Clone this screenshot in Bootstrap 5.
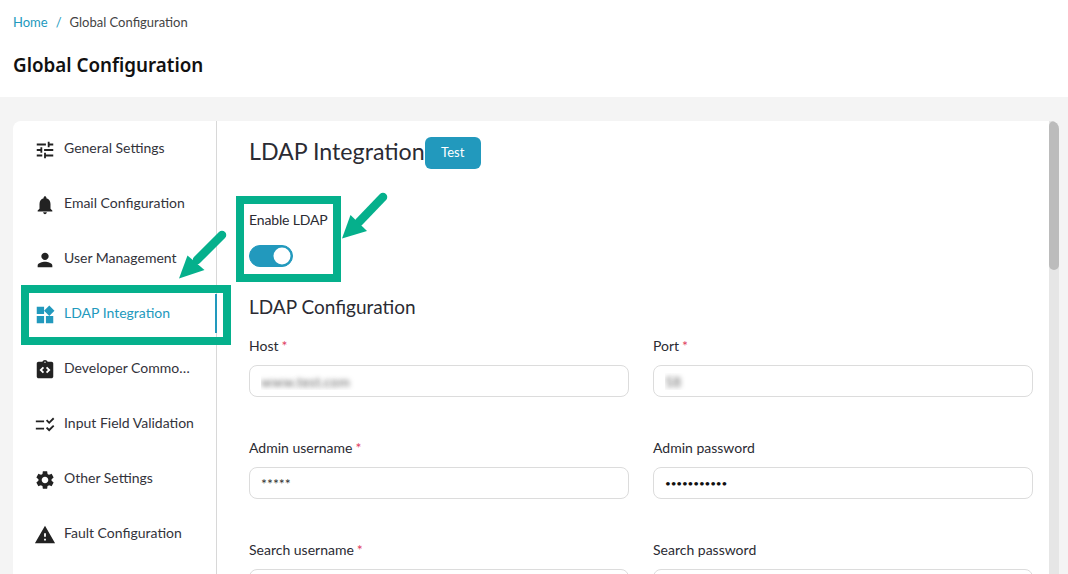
<!doctype html>
<html lang="en">
<head>
<meta charset="utf-8">
<title>Global Configuration</title>
<link href="https://cdn.jsdelivr.net/npm/bootstrap@5.3.0/dist/css/bootstrap.min.css" rel="stylesheet">
<style>
html,body{height:574px;overflow:hidden}
body{background:#f4f4f4;color:#2b2b33;font-family:"Lato","Noto Sans",sans-serif;font-size:14px}
.top-head{background:#fff;height:97px;padding:12px 13px 0}
.crumbs{font-size:13px;line-height:20px;margin:0;--bs-breadcrumb-item-padding-x:8px}
.crumbs a{color:#2299bd;text-decoration:none}
.crumbs .breadcrumb-item.active{color:#444}
.crumbs .breadcrumb-item+.breadcrumb-item::before{color:#2299bd}
.page-title{font-family:"Noto Sans",sans-serif;font-size:18.8px;font-weight:600;line-height:28px;margin:19px 0 0;color:#111}
.shell{margin:24px 9px 0 13px;height:453px;background:#fff;border-radius:8px 8px 0 0;overflow:hidden}
.side{width:204px;flex:none;border-right:1px solid #d8d8d8}
.side-item{height:55px;padding-left:21px;gap:8px;color:#33333b;text-decoration:none;white-space:nowrap;position:relative}
.side-item svg{width:22px;height:22px;flex:none;fill:#222;margin-top:3px}
.side-item span{overflow:hidden;text-overflow:ellipsis;width:132px;line-height:20px;margin-bottom:1px}
.side-item.on{color:#2299bd}
.side-item.on svg{fill:#2299bd}
.side-item.on::after{content:"";position:absolute;right:-1px;top:8px;bottom:8px;width:2px;background:#2299bd}
.pane{overflow:hidden;padding:16px 16px 0 32px;min-width:0}
.pane-head{font-size:23.2px;font-weight:400;line-height:28px;margin:0;color:#2b2b33}
.test-btn{background:#2299bd;border:0;color:#fff;font-size:13px;width:56px;height:32px;padding:0;border-radius:6px}
.test-btn:hover{background:#2299bd;color:#fff}
.field-label{line-height:20px;margin:0 0 9px;display:block}
.toggle-wrap{margin-top:41px}
.toggle-wrap .field-label{margin-bottom:15px;letter-spacing:-.15px}
.form-check.switch-box{padding:0;margin:0;min-height:0;height:22px}
.switch-box .form-check-input{width:44px;height:22px;margin:0;float:none;display:block;background-color:#2299bd;border-color:#2299bd;background-image:url("data:image/svg+xml,%3csvg xmlns='http://www.w3.org/2000/svg' viewBox='-4 -4 8 8'%3e%3ccircle r='3.4' fill='%23fff'/%3e%3c/svg%3e")}
.sub-head{font-size:19px;font-weight:400;line-height:26px;margin:27px 0 0}
.req{color:#e0405f;margin-left:3px}
.form-row{--bs-gutter-x:24px;--bs-gutter-y:0}
.fld{margin-top:16px;height:86px}
.fld .form-control{height:32px;border-color:#dcdcdc;border-radius:8px;padding:0 11px;font-size:14px;color:#333;box-shadow:none}
.fld .blurred{color:transparent;text-shadow:0 0 5px #666}
.fld .dots{color:#111;font-size:10px;letter-spacing:-.15px}
.fake-track{width:10px;flex:none;background:#e6e6e6}
.fake-thumb{height:149px;background:#bcbcbc;border-radius:5px}
.overlay{position:absolute;left:0;top:0;pointer-events:none}
</style>
</head>
<body>
<header class="top-head">
  <nav aria-label="breadcrumb"><ol class="breadcrumb crumbs">
    <li class="breadcrumb-item"><a href="#">Home</a></li>
    <li class="breadcrumb-item active" aria-current="page">Global Configuration</li>
  </ol></nav>
  <h1 class="page-title">Global Configuration</h1>
</header>
<main class="shell d-flex">
  <aside class="side">
    <a href="#" class="side-item d-flex align-items-center"><svg viewBox="0 0 24 24"><path d="M3 17v2h6v-2H3zM3 5v2h10V5H3zm10 16v-2h8v-2h-8v-2h-2v6h2zM7 9v2H3v2h4v2h2V9H7zm14 4v-2H11v2h10zm-6-4h2V7h4V5h-4V3h-2v6z"/></svg><span>General Settings</span></a>
    <a href="#" class="side-item d-flex align-items-center"><svg viewBox="0 0 24 24"><path d="M12 22c1.1 0 2-.9 2-2h-4c0 1.1.89 2 2 2zm6-6v-5c0-3.07-1.64-5.64-4.5-6.32V4c0-.83-.67-1.5-1.5-1.5s-1.5.67-1.5 1.5v.68C7.63 5.36 6 7.92 6 11v5l-2 2v1h16v-1l-2-2z"/></svg><span>Email Configuration</span></a>
    <a href="#" class="side-item d-flex align-items-center"><svg viewBox="0 0 24 24"><path d="M12 12c2.21 0 4-1.79 4-4s-1.79-4-4-4-4 1.79-4 4 1.79 4 4 4zm0 2c-2.67 0-8 1.34-8 4v2h16v-2c0-2.66-5.33-4-8-4z"/></svg><span>User Management</span></a>
    <a href="#" class="side-item on d-flex align-items-center"><svg viewBox="0 0 24 24"><path d="M13 13v8h8v-8h-8zM3 21h8v-8H3v8zM3 3v8h8V3H3zm13.66-1.31L11 7.34 16.66 13l5.66-5.66-5.66-5.65z"/></svg><span>LDAP Integration</span></a>
    <a href="#" class="side-item d-flex align-items-center"><svg viewBox="0 0 24 24"><path fill-rule="evenodd" d="M19 3h-4.18C14.4 1.84 13.3 1 12 1c-1.3 0-2.4.84-2.82 2H5c-1.1 0-2 .9-2 2v14c0 1.1.9 2 2 2h14c1.1 0 2-.9 2-2V5c0-1.1-.9-2-2-2zm-7-.25c.41 0 .75.34.75.75s-.34.75-.75.75-.75-.34-.75-.75.34-.75.75-.75zM11 14.17l-1.41 1.42L6 12l3.59-3.59L11 9.83 8.83 12 11 14.17zm3.41 1.42L13 14.17 15.17 12 13 9.83l1.41-1.42L18 12l-3.59 3.59z"/></svg><span>Developer Commons Settings</span></a>
    <a href="#" class="side-item d-flex align-items-center"><svg viewBox="0 0 24 24"><path d="M16.54 11 13 7.46l1.41-1.41 2.12 2.12 4.24-4.24 1.41 1.41L16.54 11zM11 7H2v2h9V7zM16.54 19 13 15.46l1.41-1.41 2.12 2.12 4.24-4.24 1.41 1.41L16.54 19zM11 15H2v2h9v-2z"/></svg><span>Input Field Validation</span></a>
    <a href="#" class="side-item d-flex align-items-center"><svg viewBox="0 0 24 24"><path d="M19.14 12.94c.04-.3.06-.61.06-.94 0-.32-.02-.64-.07-.94l2.03-1.58c.18-.14.23-.41.12-.61l-1.92-3.32c-.12-.22-.37-.29-.59-.22l-2.39.96c-.5-.38-1.03-.7-1.62-.94l-.36-2.54c-.04-.24-.24-.41-.48-.41h-3.84c-.24 0-.43.17-.47.41l-.36 2.54c-.59.24-1.13.57-1.62.94l-2.39-.96c-.22-.08-.47 0-.59.22L2.74 8.87c-.12.21-.08.47.12.61l2.03 1.58c-.05.3-.09.63-.09.94s.02.64.07.94l-2.03 1.58c-.18.14-.23.41-.12.61l1.92 3.32c.12.22.37.29.59.22l2.39-.96c.5.38 1.03.7 1.62.94l.36 2.54c.05.24.24.41.48.41h3.84c.24 0 .44-.17.47-.41l.36-2.54c.59-.24 1.13-.56 1.62-.94l2.39.96c.22.08.47 0 .59-.22l1.92-3.32c.12-.22.07-.47-.12-.61l-2.01-1.58zM12 15.6c-1.98 0-3.6-1.62-3.6-3.6s1.62-3.6 3.6-3.6 3.6 1.62 3.6 3.6-1.62 3.6-3.6 3.6z"/></svg><span>Other Settings</span></a>
    <a href="#" class="side-item d-flex align-items-center"><svg viewBox="0 0 24 24"><path d="M1 21h22L12 2 1 21zm12-3h-2v-2h2v2zm0-4h-2v-4h2v4z"/></svg><span>Fault Configuration</span></a>
  </aside>
  <section class="pane flex-grow-1">
    <div class="d-flex align-items-start">
      <h2 class="pane-head">LDAP Integration</h2>
      <button type="button" class="btn test-btn">Test</button>
    </div>
    <div class="toggle-wrap">
      <label class="field-label" for="enable-ldap">Enable LDAP</label>
      <div class="form-check form-switch switch-box"><input class="form-check-input" type="checkbox" role="switch" id="enable-ldap" checked></div>
    </div>
    <h3 class="sub-head">LDAP Configuration</h3>
    <div class="row form-row">
      <div class="col-6 fld"><label class="field-label">Host<span class="req">*</span></label><input class="form-control blurred" value="www.test.com"></div>
      <div class="col-6 fld"><label class="field-label">Port<span class="req">*</span></label><input class="form-control blurred" value="58"></div>
      <div class="col-6 fld"><label class="field-label">Admin username<span class="req">*</span></label><input class="form-control" value="*****"></div>
      <div class="col-6 fld"><label class="field-label">Admin password</label><input class="form-control dots" type="password" value="12345678901"></div>
      <div class="col-6 fld"><label class="field-label">Search username<span class="req">*</span></label><input class="form-control"></div>
      <div class="col-6 fld"><label class="field-label">Search password</label><input class="form-control dots" type="password"></div>
    </div>
  </section>
  <div class="fake-track"><div class="fake-thumb"></div></div>
</main>
<svg class="overlay" width="1068" height="574" viewBox="0 0 1068 574" aria-hidden="true">
  <g fill="none" stroke="#05b08c" stroke-width="8">
    <rect x="25" y="289" width="202" height="52"/>
    <rect x="240" y="200" width="97" height="78"/>
  </g>
  <g stroke="#05b08c" stroke-width="8.5" stroke-linecap="round">
    <line x1="222" y1="235" x2="197" y2="260"/>
    <line x1="383" y1="197" x2="359" y2="222"/>
  </g>
  <g fill="#05b08c">
    <polygon points="179,278.500 187.500,255.500 204.500,270"/>
    <polygon points="342,238.500 350.500,215 367,231"/>
  </g>
</svg>
</body>
</html>
